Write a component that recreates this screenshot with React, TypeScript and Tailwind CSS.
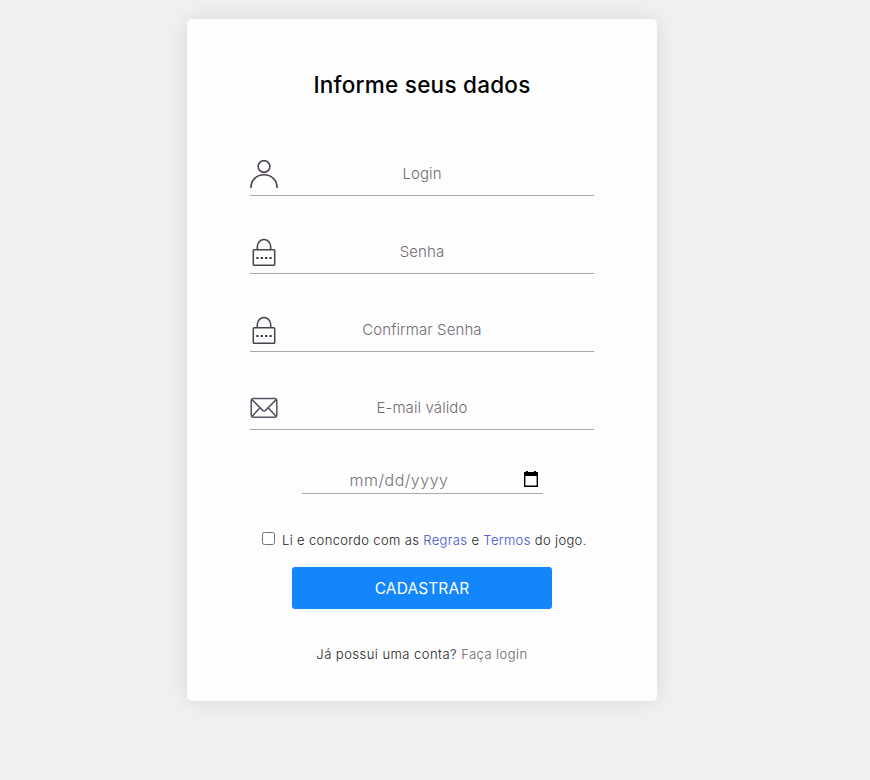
import type { ReactNode } from 'react';

function UserIcon() {
  return (
    <svg width="28" height="28" viewBox="0 0 28 28" fill="none" stroke="#4d4255" strokeWidth="1.6">
      <circle cx="14" cy="6.5" r="5.9" />
      <path d="M.9 28c0-8 5.6-13.2 13.1-13.2S27.1 20 27.1 28" />
    </svg>
  );
}

function LockIcon() {
  return (
    <svg width="28" height="28" viewBox="0 0 28 28" fill="none" stroke="#4a424f" strokeWidth="1.5">
      <rect x="3.3" y="11.7" width="21.4" height="15.6" rx="0.8" />
      <path d="M7.3 11.7V8.5a6.7 6.9 0 0 1 13.4 0v3.2" />
      <path d="M6.4 20h2M10.8 20h2M15.2 20h2M19.6 20h2" stroke="#2b2430" strokeWidth="2" />
    </svg>
  );
}

function MailIcon() {
  return (
    <svg width="28" height="28" viewBox="0 0 28 28" fill="none" stroke="#5a5062" strokeWidth="1.5">
      <rect x="1.2" y="4.4" width="25.6" height="18.8" rx="2.2" />
      <path d="m2 5.6 10.7 10.8q1.4 1.2 2.8 0L26.2 5.6M2 22.4l7.8-8.5M26.2 22.4l-7.8-8.5" />
    </svg>
  );
}

function CalendarIcon() {
  return (
    <svg width="14" height="16" viewBox="0 0 14 16" fill="none">
      <path d="M0 1h2V0h2v1h6V0h2v1h2v15H0zM1.4 5v9.5h11.2V5z" fill="#000" fillRule="evenodd" />
    </svg>
  );
}

function Field({ icon, children }: { icon: ReactNode; children: ReactNode }) {
  return (
    <div className="mb-[34px] grid h-11 w-[344px] grid-cols-[28px_1fr_28px] items-start border-b border-[#a8a8a8] pt-2">
      {icon}
      <span className="text-center leading-7 whitespace-nowrap">{children}</span>
    </div>
  );
}

export default function App() {
  return (
    <main className="flex h-[780px] justify-center bg-[#f0f0f0] pt-[19px] pr-[26px] font-['Inter','Liberation_Sans',sans-serif]">
      <section className="flex h-[682px] w-[470px] flex-col items-center rounded-[5px] bg-[#fdfdfd] pt-[50px] shadow-[0_0_20px_rgba(0,0,0,0.1)]">
        <h1 className="mb-[51px] h-8 text-[22.5px] leading-8 font-medium tracking-[0.25px] whitespace-nowrap text-black">Informe seus dados</h1>
        <div className="text-[15px] font-light tracking-[0.1px] text-[#706a73]">
          <Field icon={<UserIcon />}>Login</Field>
          <Field icon={<LockIcon />}>Senha</Field>
          <Field icon={<LockIcon />}>Confirmar Senha</Field>
          <Field icon={<MailIcon />}>E-mail válido</Field>
        </div>
        <div className="flex h-[30px] w-[241px] justify-between border-b border-[#a8a8a8] pr-[5px] pl-12">
          <span className="pt-1 text-[16px] leading-6 font-light tracking-[0.5px] whitespace-nowrap text-[#77727a]">mm/dd/yyyy</span>
          <span className="pt-[7px]"><CalendarIcon /></span>
        </div>
        <div className="mt-9 flex h-5 w-[320px] text-[13px] leading-5 font-light tracking-[0.35px] text-[#222]">
          <span className="mt-[2px] mr-[7px] size-[13px] shrink-0 rounded-[2.5px] border border-[#767076] bg-white" />
          <p className="whitespace-nowrap">Li e concordo com as <a className="text-[#3c4fd0]">Regras</a> e <a className="text-[#3c4fd0]">Termos</a> do jogo.</p>
        </div>
        <button className="mt-[17px] h-[42px] w-[260px] rounded-[3px] bg-[#1286fa] pt-[2px] text-[15.5px] tracking-[0.1px] text-white">CADASTRAR</button>
        <p className="mt-[35px] text-[13px] leading-5 font-light tracking-[0.46px] whitespace-nowrap text-[#222]">Já possui uma conta? <a className="text-[#666069]">Faça login</a></p>
      </section>
    </main>
  );
}
